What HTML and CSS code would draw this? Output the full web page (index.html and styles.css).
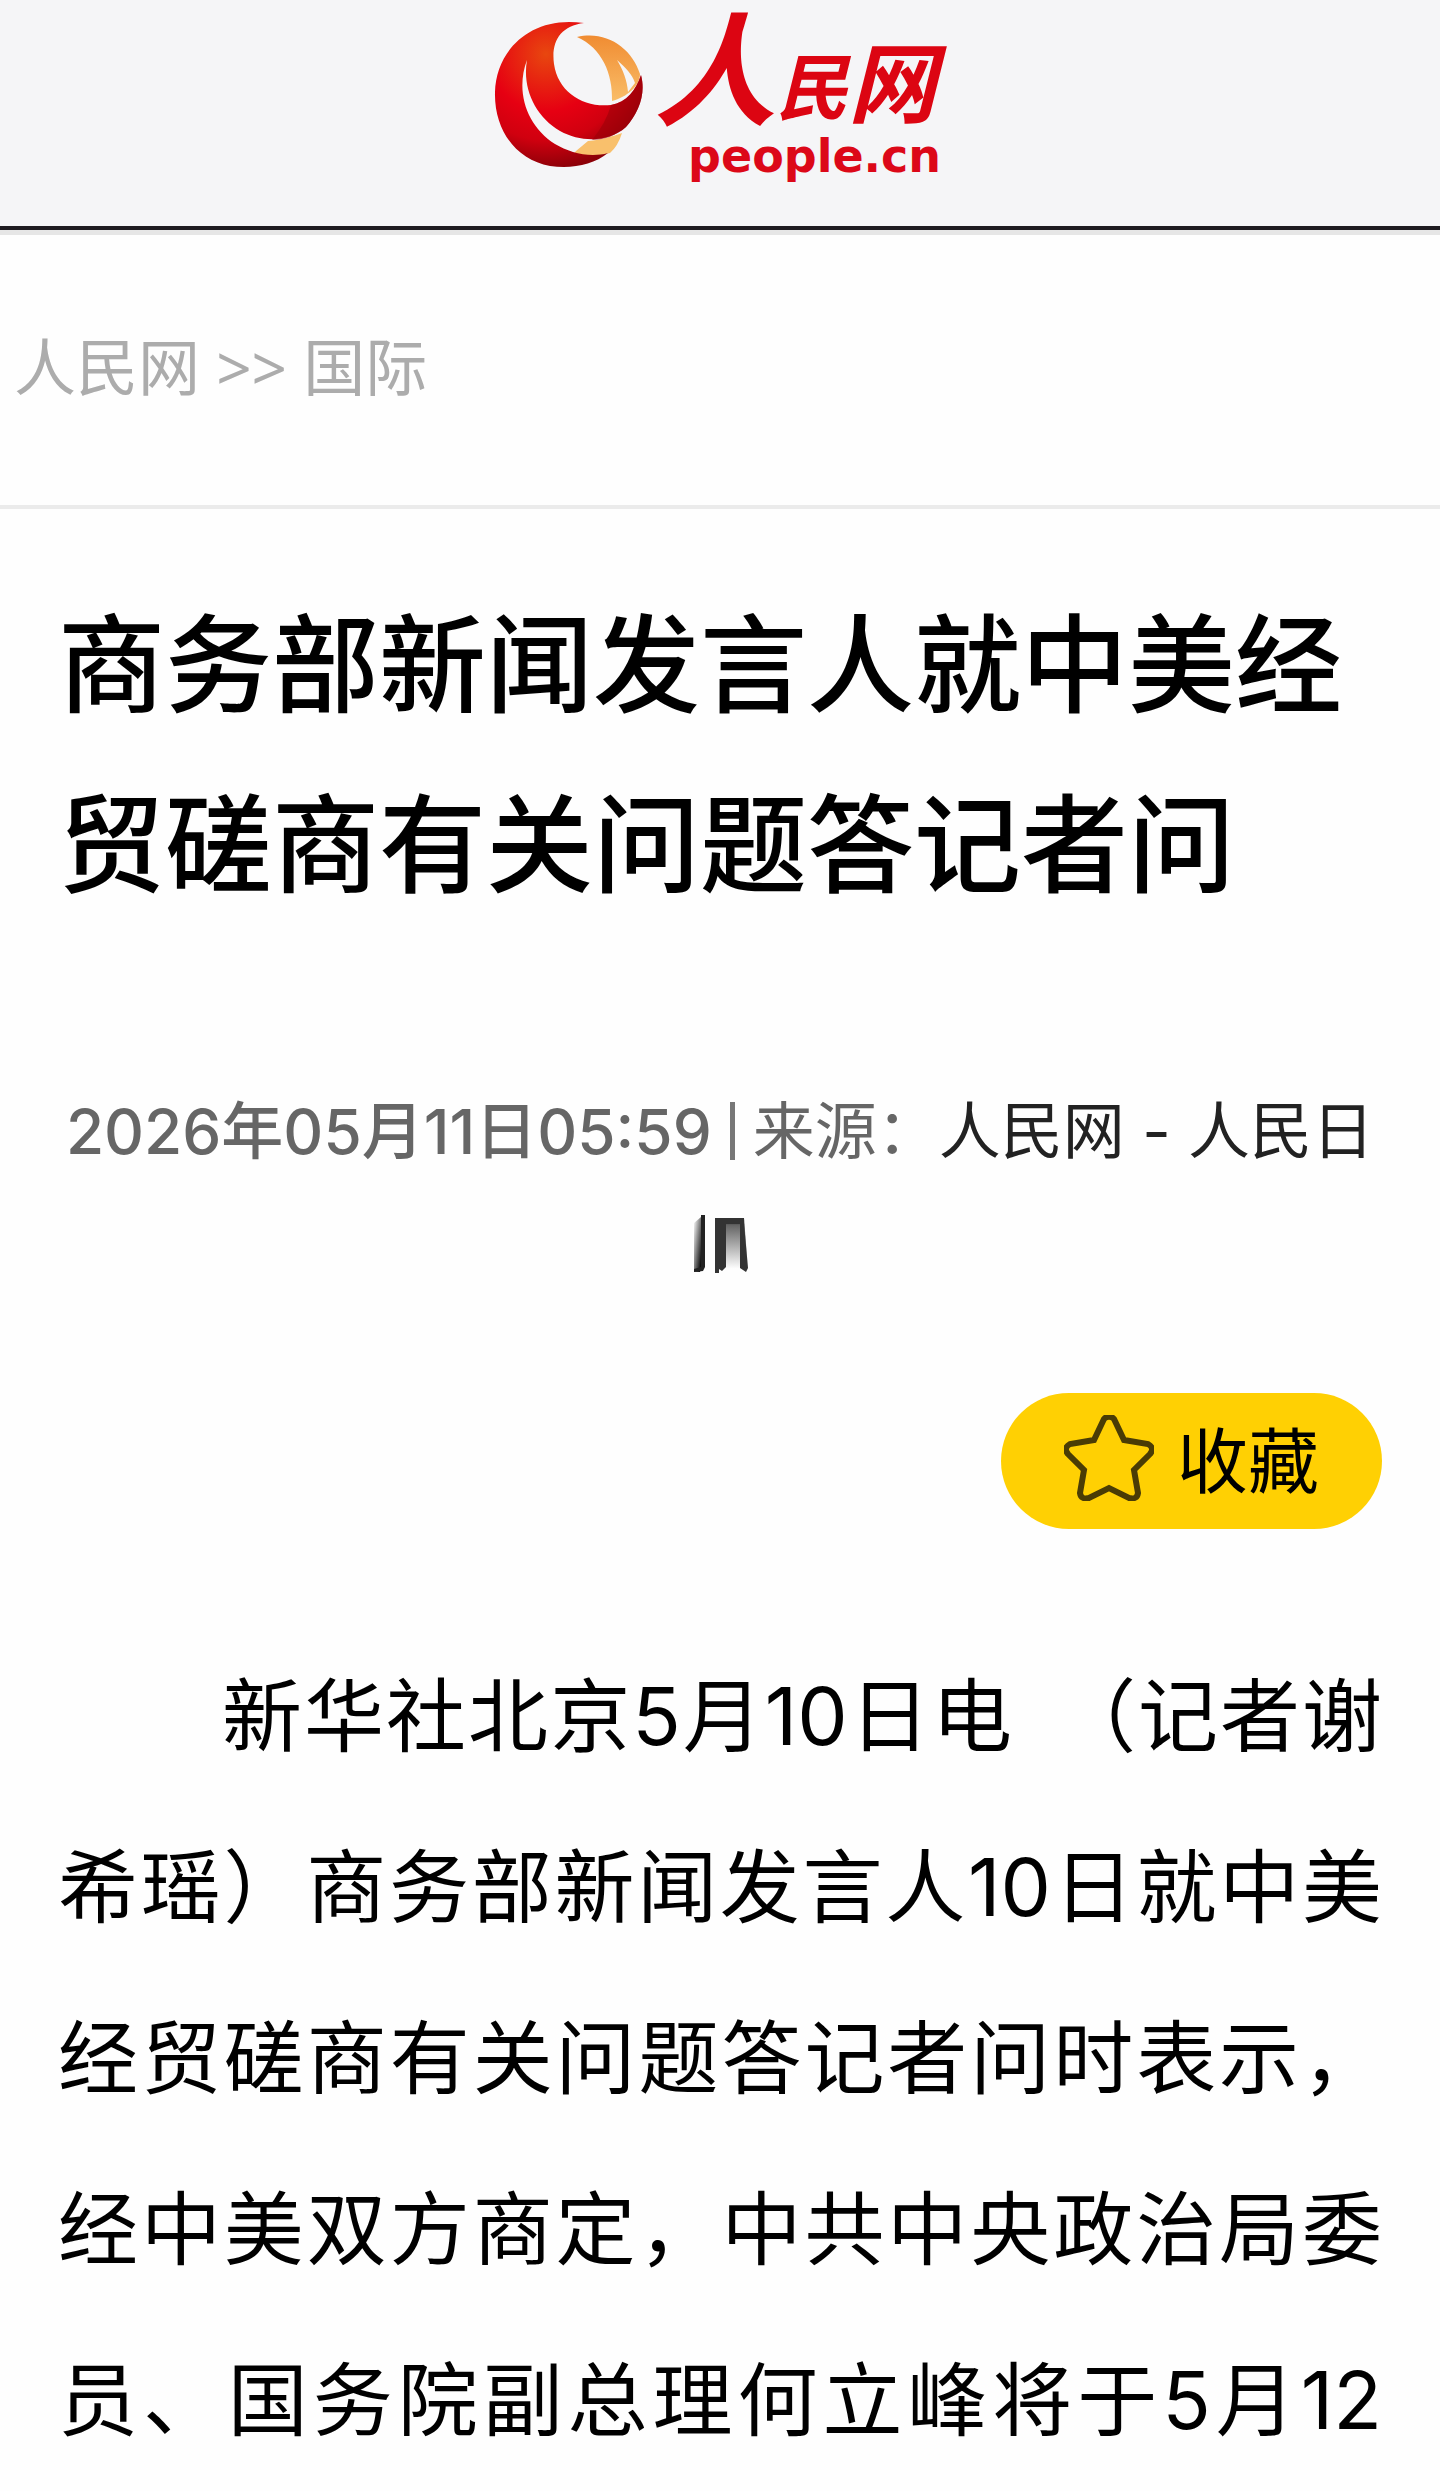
FILE: index.html
```html
<!DOCTYPE html>
<html lang="zh-CN">
<head>
<meta charset="utf-8">
<meta name="viewport" content="width=device-width, initial-scale=1">
<title>商务部新闻发言人就中美经贸磋商有关问题答记者问</title>
<link rel="stylesheet" href="styles.css">
</head>
<body>
<header class="site-header">
  <a class="logo" href="#" aria-label="人民网 people.cn">
    <svg class="logo-art" viewBox="0 0 460 190">
      <defs>
        <radialGradient id="ball" gradientUnits="userSpaceOnUse" cx="52" cy="54" r="115">
          <stop offset="0" stop-color="#e8470f"/>
          <stop offset="0.5" stop-color="#e60012"/>
          <stop offset="0.75" stop-color="#d0000f"/>
          <stop offset="1" stop-color="#8c0008"/>
        </radialGradient>
        <linearGradient id="gold" x1="0" y1="0" x2="0" y2="1">
          <stop offset="0" stop-color="#f08c32"/>
          <stop offset="1" stop-color="#f9bd68"/>
        </linearGradient>
      </defs>
      <path fill="url(#gold)" d="M83 37C112 30 138 48 146 74C146 86 133 97 118 101C119 74 108 48 83 37Z"/>
      <path fill="#f5f5f7" d="M123 60C132 68 138 74 141 83L134 92C133 80 129 70 123 60Z"/>
      <path fill="#f9c06c" d="M94 141C108 140 119 136 128 133Q124 146 116 153Q100 158 84 156Q78 155 82 151Z"/>
      <path fill="url(#ball)" d="M90 23C66 26 57 42 60 64C64 92 89 108 117 105C133 102 142 90 147 75C152 94 145 112 132 127C115 142 88 143 66 131C41 116 28 88 33 60C21 92 33 126 61 144C76 153 96 158 114 153C99 165 78 169 56 166C22 160 0 130 1 92C2 51 36 15 90 23Z"/>
      <path fill="#9c0008" opacity=".6" d="M147 75C152 94 145 112 132 127C122 136 109 140 98 140Q112 123 117 105C133 102 142 90 147 75Z"/>
      <g class="logo-name">
        <text class="logo-ren" x="160" y="116">人</text>
        <text class="logo-min" x="282" y="114">民</text>
        <text class="logo-wang" x="354" y="116">网</text>
      </g>
      <text class="logo-domain" x="194" y="172">people.cn</text>
    </svg>
  </a>
</header>

<nav class="breadcrumb" aria-label="当前位置">
  <a href="#">人民网</a> &gt;&gt; <a href="#">国际</a>
</nav>

<main class="article">
  <h1 class="title">商务部新闻发言人就中美经贸磋商有关问题答记者问</h1>
  <div class="meta">
    <p class="meta-line"><time class="date" datetime="2026-05-11T05:59">2026年05月11日05:59</time><span class="bar"></span>来源：<a class="source" href="#">人民网 - 人民日</a></p>
    <svg class="fade-mark" viewBox="0 0 60 60" aria-hidden="true">
      <defs>
        <linearGradient id="fade-left" x1="1" y1="1" x2="0" y2="0">
          <stop offset="0.1" stop-color="#111"/>
          <stop offset="1" stop-color="#fff"/>
        </linearGradient>
        <linearGradient id="fade-mid" x1="0" y1="0" x2="0" y2="1">
          <stop offset="0" stop-color="#222"/>
          <stop offset="0.15" stop-color="#666"/>
          <stop offset="1" stop-color="#fff"/>
        </linearGradient>
      </defs>
      <path fill="url(#fade-left)" d="M4 8L11 2V53L10 57H4Z"/>
      <path fill="#222" d="M11 0H15V52L13 56L4 57V54L11 52Z"/>
      <path fill="url(#fade-mid)" d="M25 3H54L58 54H25Z"/>
      <path fill="#333" d="M25 3H54V9H36V52L32 56L29 54V58H25ZM50 8H54L58 53L56 57L50 53Z"/>
    </svg>
  </div>

  <div class="actions">
    <button class="favorite" type="button">
      <svg class="star" viewBox="0 0 90 86" aria-hidden="true">
        <path d="M40 4Q45 -1 50 4L60 25L84 29Q91 33 86 39L70 55L74 78Q73 85 65 83L45 73L25 83Q17 85 16 78L20 55L4 39Q-1 33 6 29L30 25Z"/>
      </svg>
      <span>收藏</span>
    </button>
  </div>

  <p class="body-text">　　新华社北京5月10日电　（记者谢希瑶）商务部新闻发言人10日就中美经贸磋商有关问题答记者问时表示，经中美双方商定，中共中央政治局委员、国务院副总理何立峰将于5月12</p>
</main>
</body>
</html>
```
FILE: styles.css
```css
* {
  box-sizing: border-box;
}

body {
  margin: 0;
  background: #fefefe;
  color: #000;
  font-family: Inter, "Noto Sans CJK SC", sans-serif;
}

a {
  color: inherit;
  text-decoration: none;
}

.site-header {
  display: flex;
  justify-content: center;
  background: #f5f5f7;
  border-bottom: 4px solid #1e1c21;
  box-shadow: 0 5px 0 #e6e6e6;
}

.logo {
  display: flex;
  padding: 0 0 36px 8px;
}

.logo-art {
  width: 460px;
  height: 190px;
}

.logo-name {
  fill: #dc0512;
  font-family: "Noto Sans CJK SC", sans-serif;
  font-style: italic;
  font-weight: 700;
}

.logo-ren {
  font-size: 122px;
}

.logo-min {
  font-size: 72px;
}

.logo-wang {
  font-size: 88px;
}

.logo-domain {
  fill: #dc0818;
  font-family: "DejaVu Sans", sans-serif;
  font-size: 46px;
  font-weight: 700;
}

.breadcrumb {
  padding: 92px 14px 93px;
  border-bottom: 4px solid #ebebeb;
  color: #acacac;
  font-family: "Noto Sans", "Noto Sans CJK SC", sans-serif;
  font-size: 62px;
  line-height: 90px;
}

.article {
  padding: 66px 58px 0;
}

.title {
  margin: 0;
  font-size: 107px;
  font-weight: 500;
  line-height: 180px;
}

.meta {
  display: flex;
  flex-direction: column;
  align-items: center;
  padding-top: 140px;
}

.meta-line {
  margin: 0;
  color: #666;
  font-size: 62px;
  line-height: 114px;
  white-space: nowrap;
}

.date {
  font-weight: 500;
}

.bar {
  display: inline-block;
  width: 5px;
  height: 58px;
  margin: 0 18px;
  background: #777;
  vertical-align: -6px;
}

.source {
  color: #222;
}

.fade-mark {
  width: 60px;
  height: 60px;
  margin-top: 26px;
}

.actions {
  display: flex;
  justify-content: flex-end;
  padding-top: 118px;
}

.favorite {
  display: flex;
  align-items: center;
  gap: 23px;
  height: 136px;
  padding: 0 63px;
  border: 0;
  border-radius: 68px;
  background: #ffd003;
  color: #000;
  font-family: inherit;
  font-size: 71px;
  line-height: 100px;
}

.star {
  width: 90px;
  height: 86px;
  margin-bottom: 6px;
  fill: none;
  stroke: #4a3c05;
  stroke-width: 6;
}

.body-text {
  margin: 101px 0 0;
  font-size: 80px;
  line-height: 171px;
  text-align: justify;
  text-align-last: justify;
}
```
